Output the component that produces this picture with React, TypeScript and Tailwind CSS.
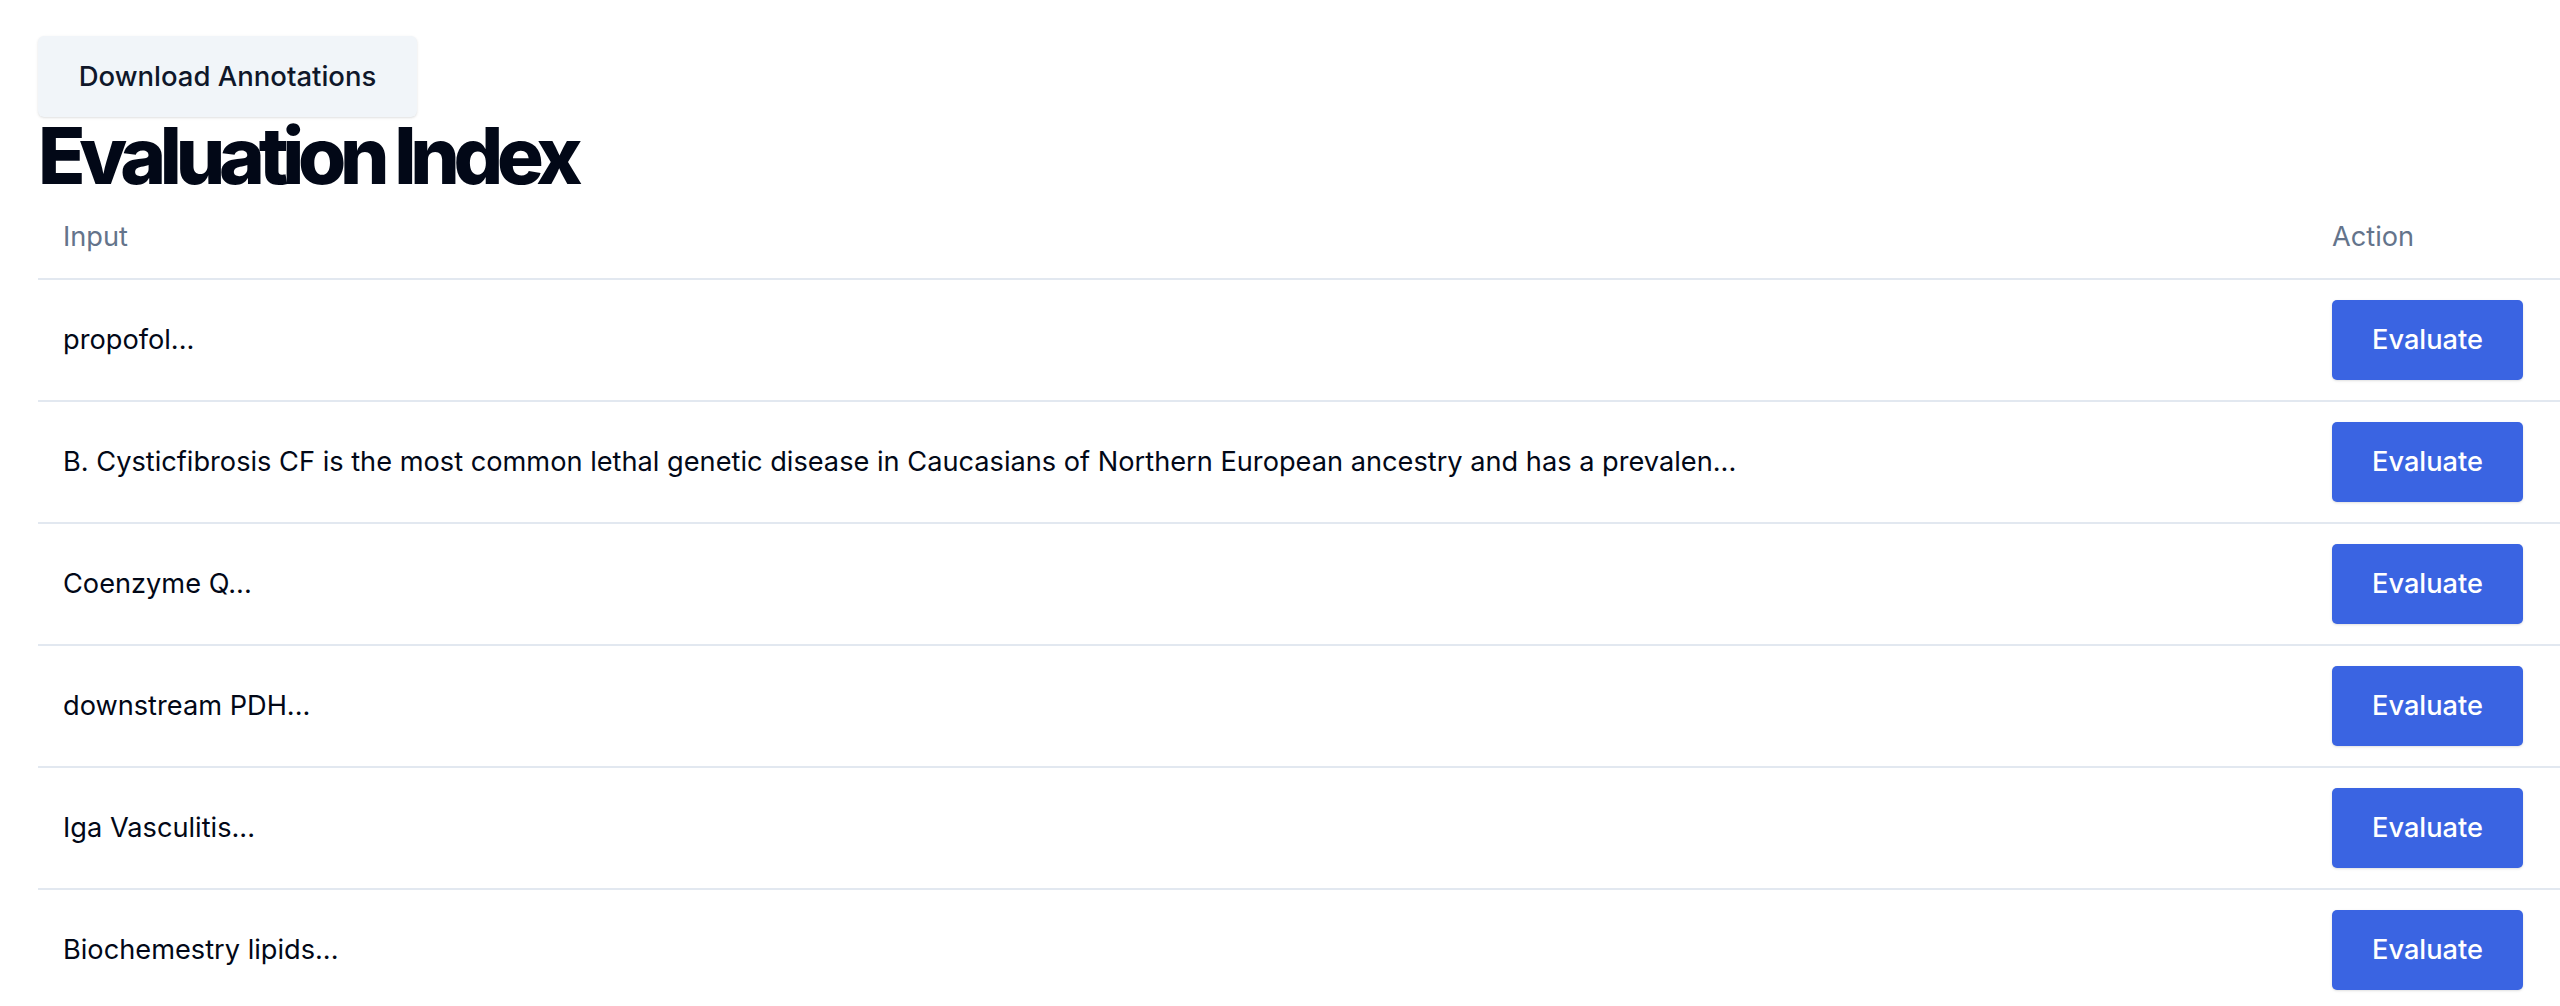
const rows = [
  "propofol...",
  "B. Cysticfibrosis CF is the most common lethal genetic disease in Caucasians of Northern European ancestry and has a prevalen...",
  "Coenzyme Q...",
  "downstream PDH...",
  "Iga Vasculitis...",
  "Biochemestry lipids...",
];

const App = () => {
  return (
    <div
      className="min-h-screen bg-white pl-[38px] pt-[36px] overflow-hidden"
      style={{ fontFamily: "Inter, 'Noto Sans', sans-serif" }}
    >
      <button className="h-[81px] w-[379px] rounded-[6px] bg-[#f1f5f9] text-[27.5px] font-medium text-[#0f172a] shadow-sm">
        Download Annotations
      </button>
      <h1 className="text-[78px] leading-none font-extrabold tracking-[-0.08em] text-[#020817]">
        Evaluation Index
      </h1>
      <table className="w-full border-collapse text-[27.2px]">
        <thead>
          <tr className="h-[84px] border-b-2 border-[#e2e8f0]">
            <th className="px-[25px] pt-[2px] text-left font-normal text-[#64748b]">
              Input
            </th>
            <th className="w-[254px] px-[26px] pt-[2px] text-left font-normal text-[#64748b]">
              Action
            </th>
          </tr>
        </thead>
        <tbody>
          {rows.map((text, i) => (
            <tr key={i} className="border-b-2 border-[#e2e8f0]">
              <td className="px-[25px] py-[20px] text-[#020817]">{text}</td>
              <td className="px-[26px] py-[20px]">
                <button className="h-[80px] w-[191px] rounded-[5px] bg-[#3a64e2] font-medium text-white shadow-sm">
                  Evaluate
                </button>
              </td>
            </tr>
          ))}
        </tbody>
      </table>
    </div>
  );
};

export default App;
